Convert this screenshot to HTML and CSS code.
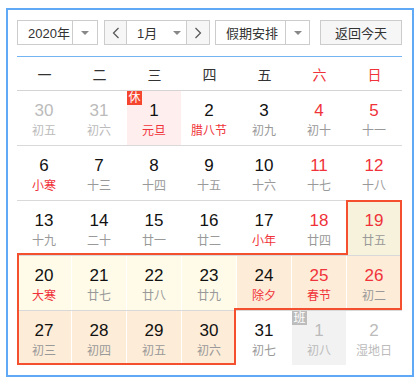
FILE: index.html
```html
<!DOCTYPE html>
<html lang="zh-CN">
<head>
  <meta charset="UTF-8">
  <meta name="viewport" content="width=device-width, initial-scale=1">
  <title>万年历</title>
  <link rel="stylesheet" href="styles.css">
</head>
<body>
  <div class="calendar">
    <div class="toolbar">
      <div class="select year">
        <span class="select-text">2020年</span>
        <span class="select-arrow"><i class="caret"></i></span>
      </div>

      <div class="month-group">
        <button class="nav">
          <svg width="8" height="12" viewBox="0 0 8 12"><polyline points="6.5,1 1.5,6 6.5,11" fill="none" stroke="#555" stroke-width="1.2"/></svg>
        </button>
        <div class="month-select">
          <span>1月</span>
          <i class="caret"></i>
        </div>
        <button class="nav next">
          <svg width="8" height="12" viewBox="0 0 8 12"><polyline points="1.5,1 6.5,6 1.5,11" fill="none" stroke="#555" stroke-width="1.2"/></svg>
        </button>
      </div>

      <div class="select plan">
        <span class="select-text">假期安排</span>
        <span class="select-arrow"><i class="caret"></i></span>
      </div>

      <button class="today">返回今天</button>
    </div>

    <div class="weekdays">
      <span>一</span><span>二</span><span>三</span><span>四</span><span>五</span>
      <span class="weekend">六</span><span class="weekend">日</span>
    </div>

    <div class="days">
      <div class="week">
        <div class="day other"><b>30</b><small>初五</small></div>
        <div class="day other"><b>31</b><small>初六</small></div>
        <div class="day rest-day"><em class="tag rest">休</em><b>1</b><small class="fest">元旦</small></div>
        <div class="day"><b>2</b><small class="fest">腊八节</small></div>
        <div class="day"><b>3</b><small>初九</small></div>
        <div class="day red"><b>4</b><small>初十</small></div>
        <div class="day red"><b>5</b><small>十一</small></div>
      </div>
      <div class="week">
        <div class="day"><b>6</b><small class="fest">小寒</small></div>
        <div class="day"><b>7</b><small>十三</small></div>
        <div class="day"><b>8</b><small>十四</small></div>
        <div class="day"><b>9</b><small>十五</small></div>
        <div class="day"><b>10</b><small>十六</small></div>
        <div class="day red"><b>11</b><small>十七</small></div>
        <div class="day red"><b>12</b><small>十八</small></div>
      </div>
      <div class="week">
        <div class="day"><b>13</b><small>十九</small></div>
        <div class="day"><b>14</b><small>二十</small></div>
        <div class="day"><b>15</b><small>廿一</small></div>
        <div class="day"><b>16</b><small>廿二</small></div>
        <div class="day"><b>17</b><small class="fest">小年</small></div>
        <div class="day red"><b>18</b><small>廿四</small></div>
        <div class="day red work-day"><b>19</b><small>廿五</small></div>
      </div>
      <div class="week">
        <div class="day light"><b>20</b><small class="fest">大寒</small></div>
        <div class="day light"><b>21</b><small>廿七</small></div>
        <div class="day light"><b>22</b><small>廿八</small></div>
        <div class="day light"><b>23</b><small>廿九</small></div>
        <div class="day vacation"><b>24</b><small class="fest">除夕</small></div>
        <div class="day vacation red"><b>25</b><small class="fest">春节</small></div>
        <div class="day vacation red"><b>26</b><small>初二</small></div>
      </div>
      <div class="week">
        <div class="day vacation"><b>27</b><small>初三</small></div>
        <div class="day vacation"><b>28</b><small>初四</small></div>
        <div class="day vacation"><b>29</b><small>初五</small></div>
        <div class="day vacation"><b>30</b><small>初六</small></div>
        <div class="day"><b>31</b><small>初七</small></div>
        <div class="day other shift"><em class="tag work">班</em><b>1</b><small>初八</small></div>
        <div class="day other"><b>2</b><small>湿地日</small></div>
      </div>

      <svg class="range-outline" width="385" height="275" viewBox="0 0 385 275">
        <path d="M330 110 H384 V218 H218 V273 H1 V163 H330 Z" fill="none" stroke="#f4502f" stroke-width="2"/>
      </svg>
    </div>
  </div>
</body>
</html>
```

FILE: styles.css
```css
body {
  margin: 0;
  font-family: "Liberation Sans", "Noto Sans CJK SC", sans-serif;
  background: #fff;
}

.calendar {
  width: 385px;
  margin: 8px 0 0 6px;
  padding: 10px 10px 10px 9px;
  border: 2px solid #5fa9f6;
  background: #fff;
}

/* toolbar */

.toolbar {
  display: flex;
  height: 25px;
  margin-bottom: 11px;
  font-size: 13px;
  color: #333;
}

.select,
.month-group {
  display: flex;
  box-sizing: border-box;
  height: 25px;
  border: 1px solid #ccc;
  background: #fff;
}

.select-text {
  display: flex;
  align-items: center;
  padding-left: 10px;
  border-right: 1px solid #ccc;
}

.select-arrow {
  display: flex;
  align-items: center;
  justify-content: center;
}

.caret {
  width: 0;
  height: 0;
  border-left: 4px solid transparent;
  border-right: 4px solid transparent;
  border-top: 4px solid #888;
}

.year .select-text { width: 44px; }
.year .select-arrow { width: 24px; }

.month-group {
  margin-left: 6px;
}

.nav {
  display: flex;
  align-items: center;
  justify-content: center;
  width: 22px;
  padding: 0;
  border: none;
  border-right: 1px solid #ccc;
  background: #f6f6f6;
}

.nav.next {
  width: 23px;
  border-right: none;
  border-left: 1px solid #ccc;
}

.month-select {
  display: flex;
  align-items: center;
  width: 59px;
  padding-left: 10px;
  box-sizing: border-box;
}

.month-select .caret {
  margin-left: 16px;
}

.plan {
  margin-left: 5px;
}

.plan .select-text { width: 59px; }
.plan .select-arrow { width: 23px; }

.today {
  margin-left: auto;
  width: 82px;
  height: 25px;
  padding: 0;
  border: 1px solid #ccc;
  background: #f6f6f6;
  font-family: inherit;
  font-size: 13px;
  color: #333;
}

/* weekday header */

.weekdays {
  display: grid;
  grid-template-columns: repeat(7, 55px);
  height: 33px;
  border-top: 1px solid #73b4f5;
  border-bottom: 1px solid #d4d4d4;
  font-size: 14px;
  color: #333;
}

.weekdays span {
  display: flex;
  align-items: center;
  justify-content: center;
}

.weekdays .weekend {
  color: #f0333a;
}

/* days */

.days {
  position: relative;
}

.week {
  display: grid;
  grid-template-columns: repeat(7, 55px);
  height: 54px;
  border-bottom: 1px solid #d9d9d9;
}

.week:last-of-type {
  border-bottom: none;
}

.day {
  position: relative;
  display: flex;
  flex-direction: column;
  align-items: center;
  padding-top: 10px;
  border-right: 1px solid #fff;
}

.day b {
  font-weight: normal;
  font-size: 17px;
  line-height: 20px;
  color: #111;
}

.day small {
  margin-top: 1px;
  font-size: 12px;
  line-height: 18px;
  color: #999;
}

.day.red b { color: #f0333a; }
.day small.fest { color: #f0333a; }

.day.other b,
.day.other small { color: #bbb; }

.rest-day { background: #ffeeee; }
.work-day { background: #f6f2dc; }
.light { background: #fffbe8; }
.vacation { background: #fdecd7; }
.shift { background: #f2f2f2; }

.tag {
  position: absolute;
  top: 0;
  left: 0;
  width: 15px;
  height: 14px;
  font-style: normal;
  font-size: 12px;
  line-height: 14px;
  text-align: center;
  color: #fff;
}

.tag.rest { background: #f5452f; }
.tag.work { background: #bcbcbc; }

.range-outline {
  position: absolute;
  top: 0;
  left: 0;
  overflow: visible;
  pointer-events: none;
}
```
